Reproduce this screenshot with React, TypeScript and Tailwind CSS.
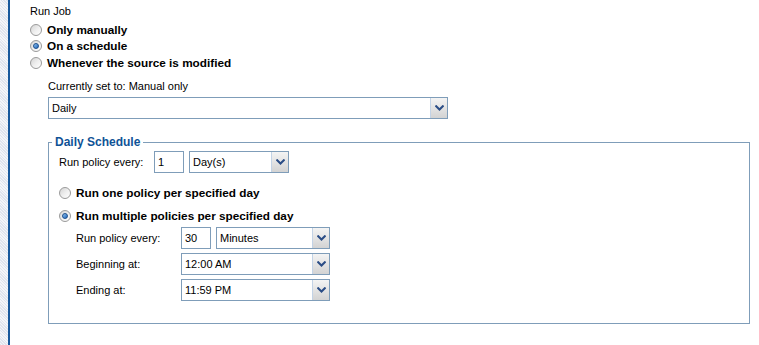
import React from 'react';

const FONT = "font-['Liberation_Sans',Arial,sans-serif]";

function Radio({ checked = false }: { checked?: boolean }) {
  return (
    <span className="flex h-[12px] w-[12px] shrink-0 items-center justify-center rounded-full border border-[#9a9a9a] bg-gradient-to-br from-[#d4d4d4] via-[#eeeeee] to-[#ffffff]">
      {checked && (
        <span className="h-[6px] w-[6px] rounded-full border border-[#1c4f8c] bg-gradient-to-br from-[#8fc3f2] to-[#1a64b8]" />
      )}
    </span>
  );
}

function Chevron() {
  return (
    <svg width="9" height="6" viewBox="0 0 9 6" className="block">
      <path d="M0.5 0.5 L4.5 4.5 L8.5 0.5" fill="none" stroke="#2b4d86" strokeWidth="2" />
    </svg>
  );
}

function Select({ value, width }: { value: string; width: string }) {
  return (
    <div className={`flex h-[22px] ${width} shrink-0 border border-[#7f9db9] bg-white`}>
      <div className="flex flex-1 items-center pl-[3px] text-[11px] text-black">{value}</div>
      <div className="flex w-[17px] items-center justify-center border-l border-[#c3d3e6] bg-gradient-to-b from-[#f4f4f4] to-[#d3d3d3]">
        <Chevron />
      </div>
    </div>
  );
}

function TextBox({ value }: { value: string }) {
  return (
    <div className="flex h-[22px] w-[30px] shrink-0 items-center border border-[#7f9db9] bg-white pl-[3px] text-[11px] text-black">
      {value}
    </div>
  );
}

function RadioRow({ checked, label, className = '' }: { checked?: boolean; label: string; className?: string }) {
  return (
    <div className={`flex h-[16px] items-center gap-[5px] ${className}`}>
      <Radio checked={checked} />
      <span className="text-[11.75px] font-bold text-black">{label}</span>
    </div>
  );
}

export default function App() {
  return (
    <div className={`flex h-[345px] w-[759px] overflow-hidden bg-white ${FONT}`}>
      {/* patterned side strip */}
      <div className="w-[8px] bg-[#e9ecf3] bg-[repeating-linear-gradient(45deg,#dfe4ee_0px,#dfe4ee_1px,#f3f5f9_1px,#f3f5f9_2px)]" />
      <div className="w-[2px] bg-[#17589c]" />

      <div className="flex flex-1 flex-col pl-[20px] pt-[4px]">
        <div className="flex h-[14px] items-center text-[11px] text-black">Run Job</div>

        <div className="mt-[4px] flex flex-col">
          <RadioRow label="Only manually" />
          <RadioRow checked label="On a schedule" />
          <RadioRow label="Whenever the source is modified" className="mt-[1px]" />
        </div>

        <div className="ml-[18px] flex flex-col">
          <div className="mt-[8px] flex h-[14px] items-center text-[11px] text-black">
            Currently set to: Manual only
          </div>
          <div className="mt-[4px]">
            <Select value="Daily" width="w-[400px]" />
          </div>

          <fieldset className="mt-[16px] h-[189px] w-[702px] border border-[#7f9db9] px-[10px] pb-0">
            <legend className="ml-[-7px] px-[3px] text-[12px] leading-[15px] font-bold text-[#0f5296]">
              Daily Schedule
            </legend>

            <div className="mt-[1px] flex items-center gap-[5px]">
              <span className="w-[90px] text-[11px] text-black">Run policy every:</span>
              <TextBox value="1" />
              <Select value="Day(s)" width="w-[100px]" />
            </div>

            <RadioRow label="Run one policy per specified day" className="mt-[12px]" />
            <RadioRow checked label="Run multiple policies per specified day" className="mt-[7px]" />

            <div className="ml-[17px] flex flex-col">
              <div className="mt-[3px] flex items-center">
                <span className="w-[105px] text-[11px] text-black">Run policy every:</span>
                <TextBox value="30" />
                <div className="ml-[5px]">
                  <Select value="Minutes" width="w-[114px]" />
                </div>
              </div>
              <div className="mt-[4px] flex items-center">
                <span className="w-[105px] text-[11px] text-black">Beginning at:</span>
                <Select value="12:00 AM" width="w-[149px]" />
              </div>
              <div className="mt-[4px] flex items-center">
                <span className="w-[105px] text-[11px] text-black">Ending at:</span>
                <Select value="11:59 PM" width="w-[149px]" />
              </div>
            </div>
          </fieldset>
        </div>
      </div>
    </div>
  );
}
